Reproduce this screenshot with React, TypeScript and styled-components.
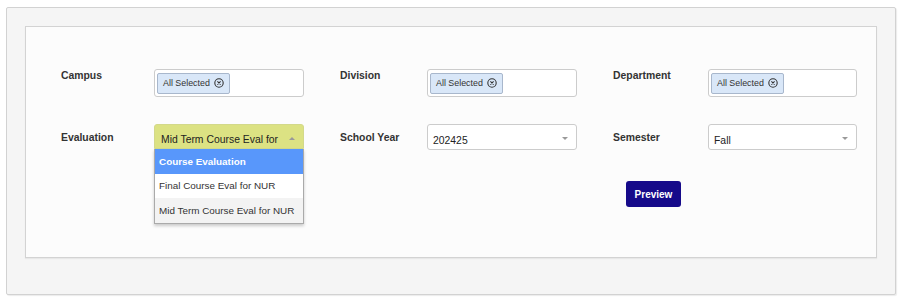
import React from 'react';
import styled, { createGlobalStyle } from 'styled-components';

const GlobalStyle = createGlobalStyle`
  html, body {
    margin: 0;
    padding: 0;
    background: #ffffff;
    font-family: 'Liberation Sans', Arial, sans-serif;
    color: #333333;
  }
`;

const Page = styled.div`
  padding: 7px 6px 4px 6px;
`;

const OuterPanel = styled.div`
  background: #f5f5f5;
  border: 1px solid #d2d2d2;
  border-radius: 2px;
  box-shadow: 1px 1px 1px rgba(0, 0, 0, 0.08);
  padding: 18px 18px 36px 18px;
`;

const InnerPanel = styled.div`
  background: #fcfcfc;
  border: 1px solid #d3d3d3;
  box-shadow: 0 1px 1px rgba(0, 0, 0, 0.05);
  padding: 42px 0 50px 35px;
  display: flex;
  flex-direction: column;
`;

const Row = styled.div<{ $gapBelow: number }>`
  display: grid;
  grid-template-columns: repeat(3, auto);
  justify-content: start;
  column-gap: 36px;
  margin-bottom: ${(p) => p.$gapBelow}px;
`;

const Field = styled.div<{ $labelWidth: number; $controlWidth: number }>`
  display: grid;
  grid-template-columns: ${(p) => p.$labelWidth}px ${(p) => p.$controlWidth}px;
  align-items: start;
`;

const Label = styled.label<{ $offset: number }>`
  font-size: 10.4px;
  font-weight: bold;
  color: #333333;
  padding-top: ${(p) => p.$offset}px;
`;

const MultiInput = styled.div`
  position: relative;
  box-sizing: border-box;
  height: 28px;
  background: #ffffff;
  border: 1px solid #cccccc;
  border-radius: 3px;
  padding: 2px;
  display: flex;
  align-items: center;
`;

const Tag = styled.span`
  box-sizing: border-box;
  height: 21px;
  width: 73px;
  display: flex;
  align-items: center;
  gap: 4px;
  padding: 0 5px;
  background: #d9e7f8;
  border: 1px solid #a8b7cc;
  border-radius: 2px;
  font-size: 8.9px;
  color: #333333;
  white-space: nowrap;
`;

const SelectBox = styled.div<{ $active?: boolean }>`
  position: relative;
  box-sizing: border-box;
  height: ${(p) => (p.$active ? 25 : 26)}px;
  background: ${(p) => (p.$active ? '#dce283' : '#ffffff')};
  border: 1px solid ${(p) => (p.$active ? '#d3d98a' : '#cccccc')};
  border-radius: ${(p) => (p.$active ? '3px 3px 0 0' : '3px')};
  display: flex;
  align-items: center;
  padding: 6px 20px 0 ${(p) => (p.$active ? 6 : 5)}px;
`;

const SelectText = styled.span`
  font-size: 10.4px;
  color: #222222;
  white-space: nowrap;
`;

const Caret = styled.span<{ $up?: boolean }>`
  position: absolute;
  right: 8px;
  top: 12px;
  width: 0;
  height: 0;
  border-left: 3px solid transparent;
  border-right: 3px solid transparent;
  ${(p) => (p.$up ? 'border-bottom: 3px solid #999999;' : 'border-top: 3px solid #999999;')}
`;

const Dropdown = styled.ul`
  position: absolute;
  top: 24px;
  left: -1px;
  right: -1px;
  margin: 0;
  padding: 0;
  list-style: none;
  background: #ffffff;
  border: 1px solid #aaaaaa;
  border-top: none;
  box-shadow: 0 2px 3px rgba(0, 0, 0, 0.2);
  z-index: 2;
`;

const Option = styled.li<{ $highlighted?: boolean; $hover?: boolean }>`
  height: 24.5px;
  display: flex;
  align-items: center;
  padding-left: 4px;
  font-size: 9.9px;
  white-space: nowrap;
  color: ${(p) => (p.$highlighted ? '#ffffff' : '#333333')};
  font-weight: ${(p) => (p.$highlighted ? 'bold' : 'normal')};
  background: ${(p) => (p.$highlighted ? '#5897fb' : p.$hover ? '#f3f3f3' : 'transparent')};
`;

const ActionRow = styled.div`
  padding-left: 565px;
`;

const PreviewButton = styled.button`
  box-sizing: border-box;
  width: 55px;
  height: 26px;
  border: none;
  border-radius: 3px;
  background: #160a8a;
  color: #ffffff;
  font-family: 'Liberation Sans', Arial, sans-serif;
  font-size: 10px;
  font-weight: bold;
  padding: 0;
  cursor: pointer;
`;

const ClearIcon = () => (
  <svg width='10' height='10' viewBox='0 0 10 10'>
    <circle cx='5' cy='5' r='4.2' fill='none' stroke='#333' strokeWidth='1.1' />
    <path d='M3.4 3.4 L6.6 6.6 M6.6 3.4 L3.4 6.6' stroke='#333' strokeWidth='1.1' />
  </svg>
);

const AllSelected = () => (
  <MultiInput>
    <Tag>
      All Selected <ClearIcon />
    </Tag>
  </MultiInput>
);

const evaluations = ['Course Evaluation', 'Final Course Eval for NUR', 'Mid Term Course Eval for NUR'];

const App: React.FC = () => (
  <>
    <GlobalStyle />
    <Page>
      <OuterPanel>
        <InnerPanel>
          <Row $gapBelow={27}>
            <Field $labelWidth={93} $controlWidth={150}>
              <Label $offset={1}>Campus</Label>
              <AllSelected />
            </Field>
            <Field $labelWidth={87} $controlWidth={150}>
              <Label $offset={1}>Division</Label>
              <AllSelected />
            </Field>
            <Field $labelWidth={95} $controlWidth={149}>
              <Label $offset={1}>Department</Label>
              <AllSelected />
            </Field>
          </Row>

          <Row $gapBelow={31}>
            <Field $labelWidth={93} $controlWidth={150}>
              <Label $offset={8}>Evaluation</Label>
              <SelectBox $active>
                <SelectText>Mid Term Course Eval for</SelectText>
                <Caret $up />
                <Dropdown>
                  {evaluations.map((name, i) => (
                    <Option key={name} $highlighted={i === 0} $hover={i === 2}>
                      {name}
                    </Option>
                  ))}
                </Dropdown>
              </SelectBox>
            </Field>
            <Field $labelWidth={87} $controlWidth={150}>
              <Label $offset={8}>School Year</Label>
              <SelectBox>
                <SelectText>202425</SelectText>
                <Caret />
              </SelectBox>
            </Field>
            <Field $labelWidth={95} $controlWidth={149}>
              <Label $offset={8}>Semester</Label>
              <SelectBox>
                <SelectText>Fall</SelectText>
                <Caret />
              </SelectBox>
            </Field>
          </Row>

          <ActionRow>
            <PreviewButton>Preview</PreviewButton>
          </ActionRow>
        </InnerPanel>
      </OuterPanel>
    </Page>
  </>
);

export default App;
